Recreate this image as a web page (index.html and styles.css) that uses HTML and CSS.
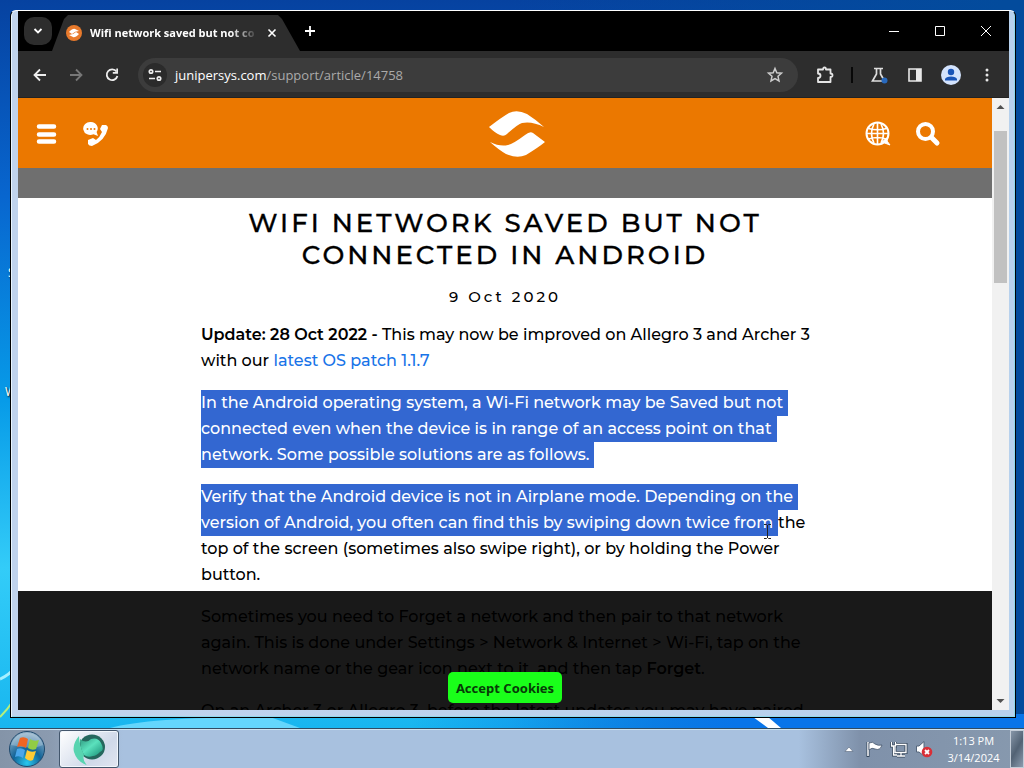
FILE: index.html
```html
<!DOCTYPE html>
<html lang="en">
<head>
<meta charset="utf-8">
<title>Wifi network saved but not connected in Android</title>
<link rel="stylesheet" href="styles.css">
</head>
<body>
<div class="desktop">
  <svg class="wallpaper" viewBox="0 0 1024 728" preserveAspectRatio="none" aria-hidden="true">
    <path d="M0 679Q8 676 18 665" stroke="#a7efff" stroke-width="3" fill="none"/>
    <path d="M0 717Q8 709 13 701" stroke="#b5ef7b" stroke-width="2" fill="none"/>
    <path d="M110 728Q150 717 270 717L300 728Z" fill="#64d6fc"/>
    <path d="M753 717L768 717L781 728L768 728Z" fill="#fff"/>
  </svg>
  <span class="desk-label label-one">S</span>
  <span class="desk-label label-two">W</span>
  <main class="window">
    <div class="tabstrip">
      <button class="tab-search" aria-label="Search tabs"><svg width="12" height="12" viewBox="0 0 12 12"><path d="M2.500 4L6 7.500L9.500 4" fill="none" stroke="#fff" stroke-width="1.800"/></svg></button>
      <div class="tab">
        <svg width="16" height="16" viewBox="0 0 16 16"><circle cx="8" cy="8" r="8" fill="#e87a2c"/><path d="M3 7Q7 3 9 4L13 6Q9 6 6 9ZM13 9Q9 13 7 12L3 10Q7 10 10 7Z" fill="#fff"/></svg>
        <span class="tab-title">Wifi network saved but not co</span>
        <button class="tab-close" aria-label="Close tab"><svg width="10" height="10" viewBox="0 0 10 10"><path d="M1.500 1.500L8.500 8.500M8.500 1.500L1.500 8.500" stroke="#fff" stroke-width="1.600"/></svg></button>
      </div>
      <button class="new-tab" aria-label="New tab"><svg width="12" height="12" viewBox="0 0 12 12"><path d="M6 1V11M1 6H11" stroke="#fff" stroke-width="1.800"/></svg></button>
      <div class="win-controls">
        <button aria-label="Minimize"><svg width="12" height="12" viewBox="0 0 12 12"><path d="M1 6.500H11" stroke="#fff"/></svg></button>
        <button aria-label="Maximize"><svg width="12" height="12" viewBox="0 0 12 12"><path d="M1.500 1.500H10.500V10.500H1.500Z" fill="none" stroke="#fff"/></svg></button>
        <button aria-label="Close"><svg width="12" height="12" viewBox="0 0 12 12"><path d="M1 1L11 11M11 1L1 11" stroke="#fff"/></svg></button>
      </div>
    </div>
    <div class="toolbar">
      <button aria-label="Back"><svg width="16" height="16" viewBox="0 0 16 16"><path d="M14 8H2.500M8 2.500L2.500 8L8 13.500" fill="none" stroke="#eee" stroke-width="1.800"/></svg></button>
      <button aria-label="Forward"><svg width="16" height="16" viewBox="0 0 16 16"><path d="M2 8H13.500M8 2.500L13.500 8L8 13.500" fill="none" stroke="#777" stroke-width="1.800"/></svg></button>
      <button aria-label="Reload"><svg width="16" height="16" viewBox="0 0 16 16"><path d="M12.500 4.500A5.400 5.400 0 1 0 13.400 9" fill="none" stroke="#eee" stroke-width="1.800"/><path d="M14 1.500V6.700H8.800V5H12.300V1.500Z" fill="#eee"/></svg></button>
      <div class="omnibox">
        <button class="site-info" aria-label="Site information"><svg width="16" height="16" viewBox="0 0 16 16" fill="none" stroke="#eee" stroke-width="1.700"><circle cx="4" cy="4.500" r="1.700"/><path d="M8 4.500H14M2 11.500H8"/><circle cx="12" cy="11.500" r="1.700"/></svg></button>
        <span class="url">junipersys.com<span class="path">/support/article/14758</span></span>
        <button class="star" aria-label="Bookmark"><svg width="18" height="18" viewBox="0 0 18 18"><path d="M9 2.500L10.800 6.800L15.500 7.200L12 10.300L13 14.900L9 12.500L5 14.900L6 10.300L2.500 7.200L7.200 6.800Z" fill="none" stroke="#ccc" stroke-width="1.500"/></svg></button>
      </div>
      <div class="tools">
        <button aria-label="Extensions"><svg width="18" height="18" viewBox="0 0 18 18"><path d="M2 3.500H7Q7 1.500 8.500 1.500T10 3.500H14.500V7.500Q16.500 7.500 16.500 9.300T14.500 11V16H2V12Q4.500 12 4.500 9.800T2 7.500Z" fill="none" stroke="#e5e5e5" stroke-width="1.800" stroke-linejoin="round"/></svg></button>
        <span class="divider"></span>
        <button aria-label="Experiments"><svg width="18" height="18" viewBox="0 0 18 18"><path d="M4 2.500H13M6.500 2.500V8L2.500 15H14.500L10.500 8V2.500" fill="none" stroke="#ddd" stroke-width="1.700"/><circle cx="14.500" cy="14.500" r="3" fill="#2869bd"/></svg></button>
        <button aria-label="Side panel"><svg width="16" height="16" viewBox="0 0 16 16"><path d="M2 2H14V14H2Z" fill="none" stroke="#e8e8e8" stroke-width="1.600"/><path d="M9 2H14V14H9Z" fill="#e8e8e8"/></svg></button>
        <button aria-label="Profile"><svg width="20" height="20" viewBox="0 0 20 20"><circle cx="10" cy="10" r="10" fill="#d3e3fd"/><circle cx="10" cy="7" r="3.200" fill="#1955b8"/><path d="M4 15.500V14Q5 11.500 10 11.500T16 14V15.500Z" fill="#1955b8"/></svg></button>
        <button aria-label="Menu"><svg width="16" height="16" viewBox="0 0 16 16" fill="#e8e8e8"><circle cx="8" cy="3" r="1.500"/><circle cx="8" cy="8" r="1.500"/><circle cx="8" cy="13" r="1.500"/></svg></button>
      </div>
    </div>
    <div class="viewport">
      <div class="page">
        <header class="site-header">
          <nav class="side">
            <a href="#menu" aria-label="Menu"><svg width="26" height="26" viewBox="0 0 26 26"><path d="M6 5.500H21M6 13.500H21M6 20.500H21" stroke="#fff" stroke-width="4.500" stroke-linecap="round"/></svg></a>
            <a href="#contact" aria-label="Contact"><svg width="26" height="26" viewBox="0 0 26 26"><path d="M8 1A7 6.500 0 1 0 10.500 13.200L15 15L13.600 11A7 6.500 0 0 0 8 1Z" fill="#fff"/><g fill="#ec7903"><circle cx="4.500" cy="8" r="1"/><circle cx="8" cy="8" r="1"/><circle cx="11.500" cy="8" r="1"/></g><path d="M19 4L23 4Q25 5 25 7Q22 20 9 25Q6 25 5 23L5 19L10 17L13 19Q17 16 19 11L17 8Z" fill="#fff"/></svg></a>
          </nav>
          <a class="home" href="#home" aria-label="Juniper Systems"><svg width="58" height="48" viewBox="0 0 58 48"><path d="M1 17Q14 7 21 3Q29-1 39 4Q47 9 56 17Q44 11 34 13Q30 14 19 24Q16 27 12 25Q7 23 1 17Z" fill="#fff"/><path d="M2 32Q12 37 20 35Q25 34 37 25Q42 21 45 23L57 32Q51 37 38 45Q29 49 18 44Q11 40 2 32Z" fill="#fff"/></svg></a>
          <nav class="side right">
            <a href="#language" aria-label="Language"><svg width="26" height="26" viewBox="0 0 26 26" fill="none" stroke="#fff"><circle cx="12.500" cy="12.500" r="11" stroke-width="2"/><path d="M12.500 2V23M2 12.500H23M3.500 7.500Q12.500 10 21.500 7.500M3.500 18Q12.500 15 21 18M9 3Q4 12.500 9 22M16 3Q21 12.500 16 22" stroke-width="1.600"/><path d="M17 21L23 16L22 20L25 24Z" fill="#fff"/></svg></a>
            <a href="#search" aria-label="Search"><svg width="26" height="26" viewBox="0 0 26 26" fill="none" stroke="#fff"><circle cx="10.500" cy="10.500" r="7.500" stroke-width="4"/><path d="M17 17L22 22" stroke-width="5" stroke-linecap="round"/></svg></a>
          </nav>
        </header>
        <div class="subbar"></div>
        <article class="article">
          <h1>WIFI NETWORK SAVED BUT NOT<br>CONNECTED IN ANDROID</h1>
          <p class="date">9 Oct 2020</p>
          <p><strong>Update: 28 Oct 2022 -</strong> This may now be improved on Allegro 3 and Archer 3<br>with our <a href="#patch">latest OS patch 1.1.7</a></p>
          <p><span class="sel">In the Android operating system, a Wi-Fi network may be Saved but not</span><br><span class="sel">connected even when the device is in range of an access point on that</span><br><span class="sel">network. Some possible solutions are as follows.</span></p>
          <p><span class="sel">Verify that the Android device is not in Airplane mode. Depending on the</span><br><span class="sel">version of Android, you often can find this by swiping down twice from</span>the<br>top of the screen (sometimes also swipe right), or by holding the Power<br>button.</p>
          <p>Sometimes you need to Forget a network and then pair to that network<br>again. This is done under Settings &gt; Network &amp; Internet &gt; Wi-Fi, tap on the<br>network name or the gear icon next to it, and then tap <strong>Forget</strong>.</p>
          <p>On an Archer 3 or Allegro 3, before the latest updates you may have paired</p>
        </article>
        <div class="cookies"><button class="accept">Accept Cookies</button></div>
      </div>
      <div class="scrollbar">
        <svg width="17" height="17" viewBox="0 0 17 17"><path d="M4.500 11L8.500 7L12.500 11Z" fill="#505050"/></svg>
        <div class="track"><div class="thumb"></div></div>
        <svg width="17" height="17" viewBox="0 0 17 17"><path d="M4.500 6L8.500 10L12.500 6Z" fill="#505050"/></svg>
      </div>
    </div>
  </main>
  <svg class="cursor" width="9" height="17" viewBox="0 0 9 17"><path d="M1 1.500H3.500L4.500 2.500L5.500 1.500H8M4.500 2V15M1 15.500H3.500L4.500 14.500L5.500 15.500H8" fill="none" stroke="#222"/></svg>
</div>
<footer class="taskbar">
  <button class="start" aria-label="Start"><svg width="38" height="38" viewBox="0 0 38 38">
    <defs><radialGradient id="orb" cx=".5" cy=".9" r=".9"><stop offset="0" stop-color="#28c8ef"/><stop offset=".45" stop-color="#126498"/><stop offset="1" stop-color="#9db8cd"/></radialGradient></defs>
    <circle cx="19" cy="19" r="17.500" fill="url(#orb)" stroke="#1f496d"/><path d="M3 15Q7 3 19 3T35 15Q25 20 3 15Z" fill="#fff" opacity=".25"/>
    <path d="M12 8Q16 6 20 9L18 18Q14 15 9 17Z" fill="#ef6523"/><path d="M22 9Q26 12 31 10L28 19Q24 21 20 18Z" fill="#91cc45"/><path d="M9 19Q13 17 17 20L15 28Q11 25 7 27Z" fill="#4aa6ea"/><path d="M19 20Q23 23 28 21L25 30Q21 32 17 28Z" fill="#ffcb35"/></svg></button>
  <button class="task" aria-label="Remote desktop application"><svg width="34" height="34" viewBox="0 0 34 34">
    <defs><linearGradient id="swirl" x2="1" y2="1"><stop stop-color="#2f9a80"/><stop offset=".45" stop-color="#5be1bd"/><stop offset="1" stop-color="#168b73"/></linearGradient></defs>
    <ellipse cx="20" cy="15" rx="13" ry="12.500" fill="#25675d"/><path d="M7 4Q0 12 2 20Q5 30 15 33Q10 28 12 23Q7 12 7 4Z" fill="#58d4b0"/><path d="M8 7Q14 12 19 7Q26 5 29 11Q33 18 28 20Q24 24 21 24Q16 26 12 23Q8 16 8 7Z" fill="url(#swirl)"/></svg></button>
  <div class="tray">
    <svg width="10" height="20" viewBox="0 0 10 20"><path d="M1 12.500L5 8L9 12.500Z" fill="#fff" stroke="#56657a" stroke-width=".6"/></svg>
    <svg width="18" height="18" viewBox="0 0 18 18"><path d="M3 2V17" stroke="#34465b" stroke-width="3"/><path d="M3 2V16" stroke="#fff" stroke-width="1.500"/><path d="M4 3Q8 1 10 4Q13 6 17 5Q15 11 10 9Q7 7 4 10Z" fill="#fff" stroke="#43546b" stroke-width=".8"/></svg>
    <svg width="18" height="18" viewBox="0 0 18 18"><path d="M6 4.500H16V12.500H5V7M11 13V16M7 16H15M1.500 2V6H5.500V2M3.500 6V15H7" fill="none" stroke="#34465b" stroke-width="3"/><path d="M6 4.500H16V12.500H5V7M11 13V16M7 16H15M1.500 2V6H5.500V2M3.500 6V15H7" fill="none" stroke="#fff" stroke-width="1.300"/></svg>
    <svg width="18" height="18" viewBox="0 0 18 18"><path d="M1.500 6H4L9 1.500V16L4 12H1.500Z" fill="#fff" stroke="#53647a"/><circle cx="12" cy="12" r="5.300" fill="#d92f37"/><path d="M10 10L14 14M14 10L10 14" stroke="#fff" stroke-width="1.800"/></svg>
  </div>
  <time class="clock" datetime="2024-03-14T13:13">1:13 PM<br>3/14/2024</time>
  <button class="show-desktop" aria-label="Show desktop"></button>
</footer>
</body>
</html>
```

FILE: styles.css
```css
* { box-sizing: border-box; }
body {
  margin: 0;
  height: 100vh;
  display: flex;
  flex-direction: column;
  overflow: hidden;
  font-family: "Noto Sans", sans-serif;
}
button { border: 0; padding: 0; background: none; color: inherit; font: inherit; display: flex; align-items: center; justify-content: center; flex-shrink: 0; }
svg { display: block; flex-shrink: 0; }

.desktop {
  flex: 1;
  min-height: 0;
  position: relative;
  display: flex;
  padding: 10px 8px 10px 10px;
  background: linear-gradient(90deg, transparent 40%, #0875e9 72%) 0 100% / 100% 14px no-repeat, linear-gradient(90deg, transparent 50%, #034b9c 98%), linear-gradient(#0642a0, #0866cf 27%, #079be8 55%, #33ccf8 78%, #18b6ef);
}
.wallpaper { position: absolute; inset: 0; width: 100%; height: 100%; }
.desk-label { position: absolute; color: #fff; font-size: 12px; line-height: 16px; text-shadow: 1px 1px 2px #000; }
.label-one { left: 8px; top: 265px; }
.label-two { left: 5px; top: 384px; }

.window {
  position: relative;
  flex: 1;
  min-width: 0;
  display: flex;
  flex-direction: column;
  padding: 0 6px 7px 7px;
  border: 1px solid #000;
  border-top-color: #fff;
  border-radius: 6px 6px 0 0;
  background: linear-gradient(90deg, #c0d3ec, #b7d1ed);
  box-shadow: inset 1px 0 #eaf6ff, inset -1px -1px #8dd8ed;
}
.tabstrip { height: 40px; display: flex; align-items: center; background: #000; padding: 0 0 0 6px; }
.tab-search { width: 28px; height: 28px; border-radius: 10px; background: #2d2d2d; }
.tab {
  width: 254px;
  height: 36px;
  align-self: flex-end;
  display: flex;
  align-items: center;
  gap: 8px;
  padding: 0 28px 0 14px;
  background: #2d2d2d;
  clip-path: polygon(0 100%, 12px 4px, 16px 0, 226px 0, 230px 4px, 248px 100%);
  color: #fff;
}
.tab-title { flex: 1; white-space: nowrap; font-family: "Open Sans", sans-serif; font-size: 11px; font-weight: 700; line-height: 20px; -webkit-mask-image: linear-gradient(90deg, #000 84%, transparent); mask-image: linear-gradient(90deg, #000 84%, transparent); }
.tab-close { width: 12px; height: 20px; }
.new-tab { width: 28px; height: 28px; margin-left: -10px; }
.win-controls { margin-left: auto; display: flex; }
.win-controls button { width: 46px; height: 36px; }

.toolbar { height: 47px; display: flex; align-items: center; padding: 0 12px; background: #2d2d2d; color: #fff; box-shadow: inset 0 -1px #222; }
.toolbar > button { width: 20px; height: 32px; margin-right: 16px; }
.omnibox { flex: 1; min-width: 0; height: 34px; display: flex; align-items: center; background: #3c3c3c; border-radius: 17px; padding: 0 14px 0 5px; }
.site-info { width: 24px; height: 24px; border-radius: 12px; background: #2b2b2b; }
.url { flex: 1; margin-left: 8px; font-family: "Open Sans", sans-serif; font-size: 13px; line-height: 20px; white-space: nowrap; }
.path { color: #aaa; }
.tools { display: flex; align-items: center; gap: 16px; margin-left: 17px; }
.tools button { width: 20px; height: 24px; }
.divider { width: 2px; height: 16px; background: #080808; }

.viewport { flex: 1; min-height: 0; display: flex; background: #fff; }
.page { position: relative; flex: 1; min-width: 0; overflow: hidden; color: #000; }
.site-header { height: 70px; display: flex; align-items: center; justify-content: space-between; padding: 2px 51px 0 15px; background: #eb7800; }
.side { display: flex; gap: 24px; flex: 1; }
.right { justify-content: flex-end; }
.home { margin-left: 60px; }
.home + .side { margin-left: 0; }
.subbar { height: 30px; background: #6f6f6f; }
.article { width: 608px; max-width: 100%; margin: 0 auto; padding-top: 9px; font-family: Montserrat, Inter, sans-serif; font-size: 16px; font-weight: 500; line-height: 26px; white-space: nowrap; }
h1 { margin: 0; text-align: center; font-size: 26px; line-height: 32px; font-weight: 500; -webkit-text-stroke: 0.3px #000; letter-spacing: 3px; }
p { margin: 0 0 16px; }
.date { margin: 13px 0 12px; text-align: center; font-size: 15px; letter-spacing: 3px; }
strong { font-weight: 600; }
p a { color: #1874e8; text-decoration: none; }
.sel { display: inline-block; padding-right: 5px; background: #3367d1; color: #fff; vertical-align: top; }
.cookies { position: absolute; left: 0; right: 0; bottom: 0; height: 119px; display: flex; align-items: flex-end; justify-content: center; padding-bottom: 7px; background: rgba(0, 0, 0, .9); }
.accept { height: 31px; padding: 0 8px; border-radius: 5px; background: #1aff1a; color: #073b07; font-family: "Noto Sans", sans-serif; font-size: 13px; font-weight: 700; line-height: 20px; }
.scrollbar { width: 17px; display: flex; flex-direction: column; background: #f1f1f1; }
.track { flex: 1; padding: 16px 2px 0; }
.thumb { height: 27%; background: #c1c1c1; }
.cursor { position: absolute; left: 763px; top: 523px; }

.taskbar {
  height: 40px;
  display: flex;
  align-items: center;
  border-top: 1px solid #304c63;
  box-shadow: inset 0 1px #cde4f1;
  background: linear-gradient(90deg, #8494a8, #8b9bb0 5%, #a8c1df 12%, #a8c1df 78%, #7f91aa 84%, #8799ae);
}
.start { width: 54px; height: 38px; }
.task { width: 60px; height: 38px; margin-left: 5px; border: 1px solid #43566c; border-radius: 3px; background: linear-gradient(135deg, #fff, #d0d9e9 65%, #e1e6f1); box-shadow: inset 0 0 0 1px #f2f7fc; }
.tray { margin-left: auto; display: flex; align-items: center; gap: 7px; }
.tray svg:first-child { margin-right: 4px; }
.clock { width: 77px; padding-left: 4px; text-align: center; color: #fff; font-family: "Open Sans", sans-serif; font-size: 11px; line-height: 17px; }
.show-desktop { width: 14px; height: 38px; border: 1px solid #c3ccd7; background: linear-gradient(120deg, #8796a8, #526274 50%, #8b9bae); }
```
